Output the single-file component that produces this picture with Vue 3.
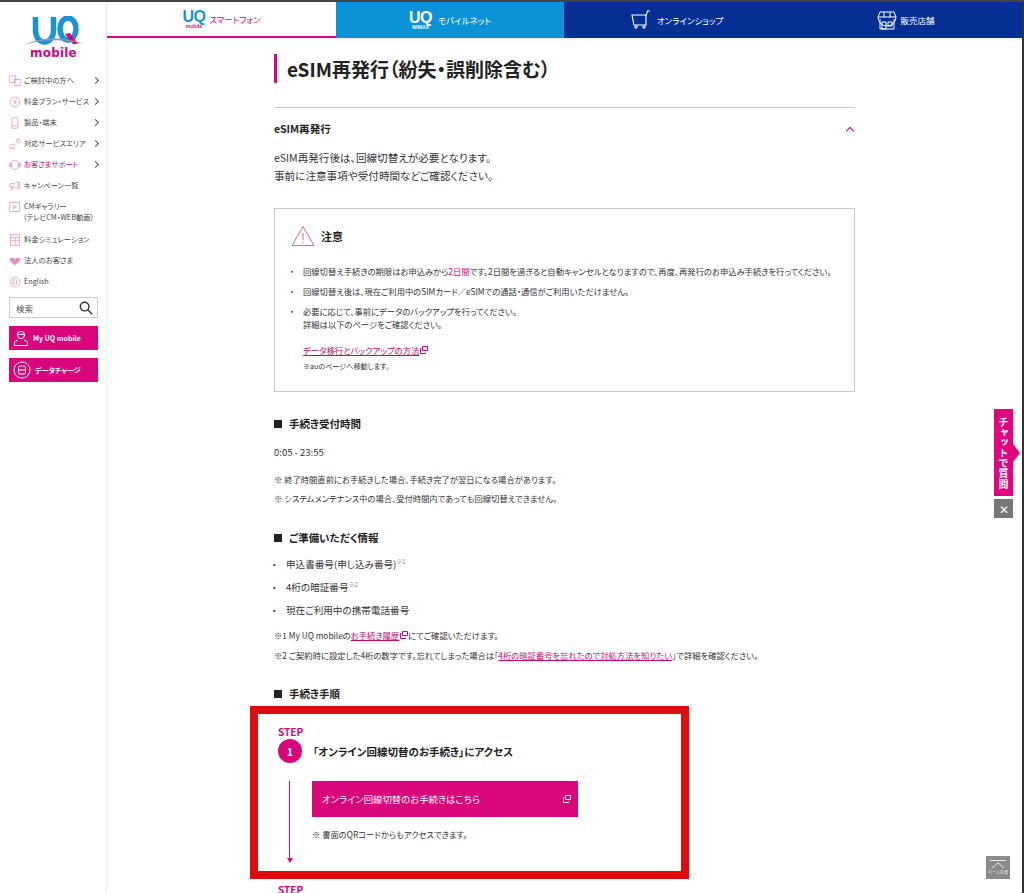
<template>
  <div class="page">
    <aside class="sidebar">
      <div class="logo">
        <svg width="64" height="46" viewBox="0 0 64 46">
          <path d="M13.5 1v13c0 7 3.500 12 9 12s9-5 9-12V1" fill="none" stroke="#1a93d6" stroke-width="5.500"/>
          <ellipse cx="46" cy="13" rx="8" ry="11" fill="none" stroke="#1a93d6" stroke-width="5.500"/>
          <path d="M43 18l5-1 8 11-5 0z" fill="#d9057b"/>
          <path d="M2.500 29C18 21 40 20 62.500 28 40 22.500 18 23 2.500 29z" fill="#7f9bb0"/>
        </svg>
        <div class="logo-word">mobile</div>
      </div>

      <nav class="side-menu">
        <a v-for="item in menu" :key="item.label" class="side-item" :class="{ active: item.active }">
          <svg class="side-icon" width="12" height="12" viewBox="0 0 16 16" fill="none" stroke="#e58fbc" stroke-width="1">
            <g v-html="item.icon"></g>
          </svg>
          <span class="side-label">{{ item.label }}<br v-if="item.sub" />{{ item.sub }}</span>
          <span v-if="item.arrow" class="side-arrow"></span>
        </a>
      </nav>

      <div class="search">
        <span>検索</span>
        <svg width="14" height="14" viewBox="0 0 14 14" fill="none" stroke="#333" stroke-width="1.4">
          <circle cx="5.6" cy="5.6" r="4.3" />
          <path d="M8.8 8.8l4.4 4.4" />
        </svg>
      </div>
      <a class="side-btn">
        <svg width="16" height="17" viewBox="0 0 16 17" fill="none" stroke="#fff" stroke-width="1">
          <circle cx="8" cy="5" r="3.6" />
          <path d="M4.4 4.4h7.2M5 10l-3.5 2v3.5h13V12L11 10" />
        </svg>
        My UQ mobile
      </a>
      <a class="side-btn">
        <svg width="18" height="18" viewBox="0 0 18 18" fill="none" stroke="#fff" stroke-width="1">
          <circle cx="9" cy="9" r="8" />
          <rect x="5.5" y="5" width="7" height="8" rx="1.5" />
          <path d="M5.5 9h7" />
        </svg>
        データチャージ
      </a>
    </aside>

    <div class="main">
      <header class="topnav">
        <a class="tab tab-phone">
          <span class="brand">
            <span class="brand-uq blue">UQ</span>
            <span class="brand-sub pink">mobile</span>
          </span>
          スマートフォン
        </a>
        <a class="tab tab-wimax">
          <span class="brand">
            <span class="brand-uq">UQ</span>
            <span class="brand-sub">WiMAX</span>
          </span>
          モバイルネット
        </a>
        <a class="tab tab-shop">
          <svg width="20" height="20" viewBox="0 0 20 20" fill="none" stroke="#fff" stroke-width="1.1">
            <path d="M1 5h14v10H3zM15 6l1.500-5H19" />
            <circle cx="5" cy="17" r="1.200" />
            <circle cx="13" cy="17" r="1.200" />
          </svg>
          オンラインショップ
        </a>
        <a class="tab tab-store">
          <svg width="20" height="20" viewBox="0 0 20 20" fill="none" stroke="#fff" stroke-width="1">
            <path d="M3 2h14l2 5a2 2 0 0 1-18 0zM1 7h18M7 2v5M13 2v5M3 9v10h14V9M5 12h4v7H5zM11 12h4v4h-4z" />
          </svg>
          販売店舗
        </a>
      </header>

      <main class="content">
        <h1 class="title">eSIM再発行（紛失・誤削除含む）</h1>

        <div class="accordion-head">
          <span>eSIM再発行</span>
          <span class="chevron-up"></span>
        </div>
        <p class="lead">eSIM再発行後は、回線切替えが必要となります。<br />事前に注意事項や受付時間などご確認ください。</p>

        <section class="notice">
          <div class="notice-head">
            <svg width="24" height="22" viewBox="0 0 24 22" fill="none" stroke="#d9639f" stroke-width="1">
              <path d="M12 1.500L1 20.500h22z" />
              <path d="M12 8v7M12 17v1.500" />
            </svg>
            <span>注意</span>
          </div>
          <ul class="notice-list">
            <li>回線切替え手続きの期限はお申込みから<em>2日間</em>です。2日間を過ぎると自動キャンセルとなりますので、再度、再発行のお申込み手続きを行ってください。</li>
            <li>回線切替え後は、現在ご利用中のSIMカード／eSIMでの通話・通信がご利用いただけません。</li>
            <li>必要に応じて、事前にデータのバックアップを行ってください。<br />詳細は以下のページをご確認ください。</li>
          </ul>
          <a class="link notice-link">データ移行とバックアップの方法<svg class="ext" width="8" height="8" viewBox="0 0 8 8" fill="none" stroke="currentColor"><path d="M2.500.5h5v4h-5zM1.500 2.500H.5v5h5v-1" /></svg></a>
          <p class="notice-note">※auのページへ移動します。</p>
        </section>

        <h2 class="heading">手続き受付時間</h2>
        <p class="hours">0:05 - 23:55</p>
        <p class="note note-first">※ 終了時間直前にお手続きした場合、手続き完了が翌日になる場合があります。</p>
        <p class="note">※ システムメンテナンス中の場合、受付時間内であっても回線切替えできません。</p>

        <h2 class="heading heading-info">ご準備いただく情報</h2>
        <ul class="info-list">
          <li>申込書番号(申し込み番号)<sup>※1</sup></li>
          <li>4桁の暗証番号<sup>※2</sup></li>
          <li>現在ご利用中の携帯電話番号</li>
        </ul>
        <p class="note note-foot">※1 My UQ mobileの<a class="link">お手続き履歴<svg class="ext" width="8" height="8" viewBox="0 0 8 8" fill="none" stroke="currentColor"><path d="M2.500.5h5v4h-5zM1.500 2.500H.5v5h5v-1" /></svg></a>にてご確認いただけます。</p>
        <p class="note note-second">※2 ご契約時に設定した4桁の数字です。忘れてしまった場合は「<a class="link">4桁の暗証番号を忘れたので対処方法を知りたい</a>」で詳細を確認ください。</p>

        <h2 class="heading heading-steps">手続き手順</h2>
        <div class="steps">
          <div class="highlight"></div>
          <div class="step-label">STEP</div>
          <div class="step-head">
            <span class="step-num">1</span>
            <span class="step-title">「オンライン回線切替のお手続き」にアクセス</span>
          </div>
          <div class="step-body">
            <div class="step-arrow"></div>
            <div class="step-main">
              <a class="step-btn">
                オンライン回線切替のお手続きはこちら
                <svg width="8" height="8" viewBox="0 0 8 8" fill="none" stroke="#fff"><path d="M2.500.5h5v4h-5zM1.500 2.500H.5v5h5v-1" /></svg>
              </a>
              <p class="step-note">※ 書面のQRコードからもアクセスできます。</p>
            </div>
          </div>
          <div class="step-label step-label-next">STEP</div>
        </div>
      </main>
    </div>

    <div class="chat">
      <a class="chat-tab">チャットで質問</a>
      <a class="chat-close">✕</a>
    </div>
    <a class="pagetop">
      <svg width="16" height="9" viewBox="0 0 16 9" fill="none" stroke="#e8e8e8"><path d="M0 .5h16M2 8l6-5 6 5" /></svg>
      <span>ページ先頭</span>
    </a>
  </div>
</template>

<script setup>
const menu = [
  { label: 'ご検討中の方へ', arrow: true, icon: '<rect x="1" y="1" width="8" height="9"/><rect x="7" y="6" width="8" height="8"/>' },
  { label: '料金プラン・サービス', arrow: true, icon: '<circle cx="8" cy="8" r="6.500"/><path d="M6 5l2 3 2-3M8 8v3M6 9h4"/>' },
  { label: '製品・端末', arrow: true, icon: '<rect x="4" y="1" width="8" height="14" rx="1"/><path d="M4 12h8"/>' },
  { label: '対応サービスエリア', arrow: true, icon: '<path d="M1 14c0-4 3-6 7-6M1 14h6V10"/><rect x="10" y="1" width="5" height="5" rx="2"/>' },
  { label: 'お客さまサポート', arrow: true, active: true, icon: '<circle cx="8" cy="8" r="6"/><rect x="1" y="6" width="2.500" height="4"/><rect x="12.500" y="6" width="2.500" height="4"/>' },
  { label: 'キャンペーン一覧', icon: '<path d="M1 5h6l5-3v10L7 9H1zM3 9v4h2V9M14 2v10"/>' },
  { label: 'CMギャラリー', sub: '(テレビCM・WEB動画)', icon: '<rect x="1" y="2" width="13" height="12"/><path d="M6 6l4 2-4 2z"/>' },
  { label: '料金シミュレーション', icon: '<rect x="2" y="1" width="12" height="14"/><path d="M2 5h12M2 9h12M8 5v10"/>' },
  { label: '法人のお客さま', icon: '<path d="M1 5l4-1 3 2 3-2 4 1-2 4-5 4-5-4z" fill="#e58fbc"/>' },
  { label: 'English', icon: '<circle cx="8" cy="8" r="6.500"/><path d="M5 5v6M5 5h3M5 8h3M5 11h3M10 6v5"/>' }
]
</script>

<style scoped>
.page {
  position: relative;
  display: flex;
  height: 893px;
  overflow: hidden;
  background: #fff;
  color: #333;
  border-top: 2px solid #444;
  border-right: 2px solid #333;
  box-sizing: border-box;
  font-family: "Noto Sans CJK JP", "Noto Sans", sans-serif;
  font-feature-settings: "palt";
  font-size: 10px;
}

a {
  color: inherit;
  text-decoration: none;
}

.sidebar {
  flex: 0 0 107px;
  min-width: 0;
  box-sizing: border-box;
  padding: 14px 8px 0 9px;
  border-right: 1px solid #f2f2f2;
  box-shadow: 1px 0 3px rgba(0, 0, 0, 0.04);
}

.logo {
  display: flex;
  flex-direction: column;
  align-items: center;
  margin-bottom: 11px;
}

.logo svg {
  margin-bottom: -15px;
}

.logo-word {
  font-family: "DejaVu Sans", sans-serif;
  font-size: 12px;
  font-weight: 700;
  line-height: 12px;
  color: #d9057b;
  letter-spacing: 0.2px;
}

.side-menu {
  display: flex;
  flex-direction: column;
}

.side-item {
  display: flex;
  align-items: center;
  min-height: 21px;
  font-size: 7.300px;
  line-height: 11px;
  color: #444;
}

.side-item.active {
  color: #d9057b;
}

.side-icon {
  flex: none;
  margin-right: 3px;
}

.side-label {
  flex: 1;
  white-space: nowrap;
}

.side-arrow {
  width: 4px;
  height: 4px;
  border-top: 1px solid #555;
  border-right: 1px solid #555;
  transform: rotate(45deg);
}

.side-item:nth-child(7) {
  min-height: 33px;
  align-items: flex-start;
  padding-top: 5px;
  box-sizing: border-box;
}

.search {
  display: flex;
  align-items: center;
  justify-content: space-between;
  box-sizing: border-box;
  height: 21px;
  margin: 5px 0 8px;
  padding: 0 4px 0 6px;
  border: 1px solid #ccc;
  font-size: 8.500px;
  color: #555;
}

.side-btn {
  display: flex;
  align-items: center;
  gap: 4px;
  height: 24px;
  margin-bottom: 8px;
  padding-left: 4px;
  background: #d9057b;
  color: #fff;
  font-size: 7px;
  font-weight: 700;
}

.main {
  flex: 1;
  min-width: 0;
  display: flex;
  flex-direction: column;
}

.topnav {
  display: flex;
  flex: none;
  height: 36px;
  box-shadow: 0 1px 3px rgba(0, 0, 0, 0.1);
}

.tab {
  display: flex;
  align-items: center;
  justify-content: center;
  gap: 6px;
  box-sizing: border-box;
  font-size: 8.500px;
  color: #fff;
}

.tab-phone {
  width: 229px;
  gap: 4px;
  color: #d9057b;
  border-bottom: 2px solid #d9057b;
}

.tab-wimax {
  width: 228px;
  background: #0b93d8;
}

.tab-shop {
  width: 226px;
  background: #052f94;
}

.tab-store {
  flex: 1;
  gap: 3px;
  background: #052f94;
}

.brand {
  display: flex;
  flex-direction: column;
  align-items: center;
  line-height: 1;
}

.brand-uq {
  font-family: "Liberation Sans", sans-serif;
  font-size: 16px;
  font-weight: 700;
  line-height: 13px;
  letter-spacing: -0.5px;
}

.brand-uq.blue {
  color: #1a93d6;
}

.brand-sub {
  font-family: "Liberation Sans", sans-serif;
  font-size: 5px;
  font-weight: 700;
  line-height: 6px;
}

.brand-sub.pink {
  color: #d9057b;
}

.content {
  position: relative;
  width: 581px;
  margin-left: 167px;
}

.title {
  margin: 16px 0 0;
  padding-left: 10px;
  border-left: 3px solid #d9057b;
  font-size: 19px;
  font-weight: 700;
  line-height: 29px;
  color: #222;
}

.accordion-head {
  display: flex;
  align-items: center;
  justify-content: space-between;
  height: 41px;
  margin-top: 24px;
  padding-right: 2px;
  border-top: 1px solid #c8c8c8;
  font-size: 10.600px;
  font-weight: 700;
  color: #222;
}

.chevron-up {
  width: 5px;
  height: 5px;
  margin-top: 4px;
  border-top: 1.500px solid #d9057b;
  border-left: 1.500px solid #d9057b;
  transform: rotate(45deg);
}

.lead {
  margin: 0;
  font-size: 10.600px;
  line-height: 18px;
}

.notice {
  margin-top: 23px;
  height: 184px;
  box-sizing: border-box;
  padding: 16px 16px 0;
  border: 1px solid #c8c8c8;
}

.notice-head {
  display: flex;
  align-items: center;
  gap: 6px;
  font-size: 11px;
  font-weight: 700;
  color: #222;
}

.notice-list {
  margin: 18px 0 0 2px;
  padding: 0;
  list-style: none;
  font-size: 8.300px;
  line-height: 13px;
}

.notice-list li {
  position: relative;
  margin-bottom: 7px;
  padding-left: 10px;
  white-space: nowrap;
}

.notice-list li::before,
.info-list li::before {
  content: "・";
  position: absolute;
  left: -3px;
}

.notice-list em {
  font-style: normal;
  color: #d9057b;
}

.link {
  color: #c7066f;
  text-decoration: underline;
}

.ext {
  margin-left: 1px;
}

.notice-link {
  display: block;
  margin: 13px 0 0 12px;
  font-size: 8.400px;
  line-height: 13px;
}

.notice-note {
  margin: 3px 0 0 12px;
  font-size: 7.100px;
  line-height: 12px;
}

.heading {
  margin: 24px 0 0;
  font-size: 10.500px;
  font-weight: 700;
  line-height: 16px;
  color: #222;
}

.heading::before {
  content: "";
  display: inline-block;
  width: 8px;
  height: 8px;
  margin-right: 7px;
  background: #222;
}

.hours {
  margin: 13px 0 0;
  font-size: 9.500px;
  line-height: 14px;
}

.note {
  margin: 6px 0 0;
  font-size: 8.300px;
  line-height: 13px;
  white-space: nowrap;
}

.note-first {
  margin-top: 14px;
}

.heading-info {
  margin-top: 25px;
}

.info-list {
  margin: 11px 0 0;
  padding: 0;
  list-style: none;
  font-size: 9.600px;
  line-height: 14px;
}

.info-list li {
  position: relative;
  margin-bottom: 9px;
  padding-left: 12px;
}

.info-list li::before {
  left: -2px;
}

.info-list sup {
  font-size: 6px;
  color: #888;
  line-height: 0;
}

.note-foot {
  margin-top: 12px;
}

.note-second {
  margin-top: 7px;
}

.heading-steps {
  margin-top: 24px;
}

.steps {
  position: relative;
  margin-top: 24px;
  padding-left: 4px;
}

.highlight {
  position: absolute;
  left: -24px;
  top: -20px;
  width: 439px;
  height: 173px;
  box-sizing: border-box;
  border: 8px solid #e00b0b;
  pointer-events: none;
}

.step-label {
  font-size: 10px;
  font-weight: 700;
  line-height: 11px;
  color: #d9057b;
}

.step-head {
  display: flex;
  align-items: center;
  gap: 11px;
  margin-top: 2px;
}

.step-num {
  display: flex;
  align-items: center;
  justify-content: center;
  width: 24px;
  height: 24px;
  border-radius: 50%;
  background: #d9057b;
  color: #fff;
  font-size: 10px;
  font-weight: 700;
}

.step-title {
  font-size: 10.500px;
  font-weight: 700;
  color: #222;
}

.step-body {
  display: flex;
  margin-top: 18px;
}

.step-arrow {
  position: relative;
  flex: none;
  width: 1px;
  height: 81px;
  margin-left: 11px;
  background: #d9057b;
}

.step-arrow::after {
  content: "";
  position: absolute;
  left: -2px;
  bottom: -1px;
  border: 3px solid transparent;
  border-top: 5px solid #d9057b;
  border-bottom: 0;
}

.step-main {
  margin-left: 22px;
}

.step-btn {
  display: flex;
  align-items: center;
  justify-content: space-between;
  box-sizing: border-box;
  width: 266px;
  height: 36px;
  padding: 0 7px 0 10px;
  background: #d9057b;
  color: #fff;
  font-size: 9.400px;
}

.step-note {
  margin: 11px 0 0;
  font-size: 8.300px;
  line-height: 13px;
}

.step-label-next {
  margin-top: 22px;
}

.chat {
  position: absolute;
  right: 9px;
  top: 407px;
  width: 19px;
}

.chat-tab {
  position: relative;
  display: block;
  height: 87px;
  box-sizing: border-box;
  padding-top: 8px;
  background: #e0057f;
  color: #fff;
  writing-mode: vertical-rl;
  font-size: 10px;
  font-weight: 700;
  line-height: 19px;
  letter-spacing: 0.300px;
}

.chat-tab::after {
  content: "";
  position: absolute;
  left: 19px;
  top: 35px;
  border: 9px solid transparent;
  border-left: 7px solid #e0057f;
  border-right: 0;
}

.chat-close {
  display: flex;
  align-items: center;
  justify-content: center;
  height: 19px;
  margin-top: 3px;
  background: #777;
  color: #fff;
  font-size: 12px;
}

.pagetop {
  position: absolute;
  right: 12px;
  top: 854px;
  width: 24px;
  height: 23px;
  display: flex;
  flex-direction: column;
  align-items: center;
  justify-content: center;
  gap: 1px;
  background: #8a8a8a;
  color: #eee;
  font-size: 4px;
  line-height: 5px;
}
</style>

<style>
body {
  background: #fff;
}
</style>
